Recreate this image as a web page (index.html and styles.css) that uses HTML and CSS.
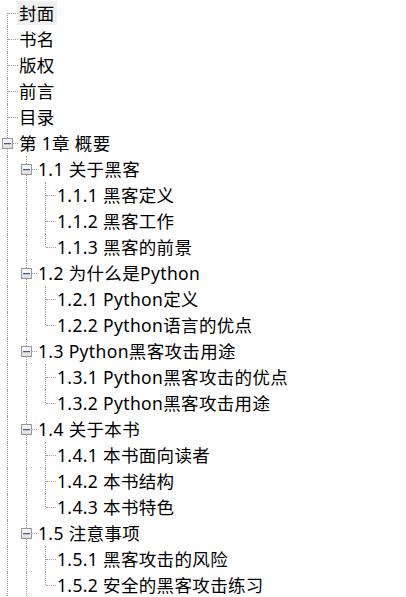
FILE: index.html
```html
<!DOCTYPE html>
<html lang="zh-CN">
<head>
<meta charset="utf-8">
<title>目录树</title>
<link rel="stylesheet" href="styles.css">
</head>
<body>
<div class="tree">
  <div class="row"><span class="c f"></span><span class="label sel">封面</span></div>
  <div class="row"><span class="c t"></span><span class="label">书名</span></div>
  <div class="row"><span class="c t"></span><span class="label">版权</span></div>
  <div class="row"><span class="c t"></span><span class="label">前言</span></div>
  <div class="row"><span class="c t"></span><span class="label">目录</span></div>
  <div class="row"><span class="c t"><i class="box"></i></span><span class="label">第 1章 概要</span></div>

  <div class="row"><span class="c v"></span><span class="c t"><i class="box"></i></span><span class="label">1.1 关于黑客</span></div>
  <div class="row"><span class="c v"></span><span class="c v"></span><span class="c t"></span><span class="label">1.1.1 黑客定义</span></div>
  <div class="row"><span class="c v"></span><span class="c v"></span><span class="c t"></span><span class="label">1.1.2 黑客工作</span></div>
  <div class="row"><span class="c v"></span><span class="c v"></span><span class="c l"></span><span class="label">1.1.3 黑客的前景</span></div>

  <div class="row"><span class="c v"></span><span class="c t"><i class="box"></i></span><span class="label">1.2 为什么是Python</span></div>
  <div class="row"><span class="c v"></span><span class="c v"></span><span class="c t"></span><span class="label">1.2.1 Python定义</span></div>
  <div class="row"><span class="c v"></span><span class="c v"></span><span class="c l"></span><span class="label">1.2.2 Python语言的优点</span></div>

  <div class="row"><span class="c v"></span><span class="c t"><i class="box"></i></span><span class="label">1.3 Python黑客攻击用途</span></div>
  <div class="row"><span class="c v"></span><span class="c v"></span><span class="c t"></span><span class="label">1.3.1 Python黑客攻击的优点</span></div>
  <div class="row"><span class="c v"></span><span class="c v"></span><span class="c l"></span><span class="label">1.3.2 Python黑客攻击用途</span></div>

  <div class="row"><span class="c v"></span><span class="c t"><i class="box"></i></span><span class="label">1.4 关于本书</span></div>
  <div class="row"><span class="c v"></span><span class="c v"></span><span class="c t"></span><span class="label">1.4.1 本书面向读者</span></div>
  <div class="row"><span class="c v"></span><span class="c v"></span><span class="c t"></span><span class="label">1.4.2 本书结构</span></div>
  <div class="row"><span class="c v"></span><span class="c v"></span><span class="c l"></span><span class="label">1.4.3 本书特色</span></div>

  <div class="row"><span class="c v"></span><span class="c t"><i class="box"></i></span><span class="label">1.5 注意事项</span></div>
  <div class="row"><span class="c v"></span><span class="c v"></span><span class="c t"></span><span class="label">1.5.1 黑客攻击的风险</span></div>
  <div class="row"><span class="c v"></span><span class="c v"></span><span class="c l"></span><span class="label">1.5.2 安全的黑客攻击练习</span></div>
  <div class="row"><span class="c v"></span><span class="c v"></span></div>
</div>
</body>
</html>
```

FILE: styles.css
```css
html, body {
  margin: 0;
  padding: 0;
  background: #ffffff;
}

.tree {
  display: flex;
  flex-direction: column;
  font-family: "Noto Sans", "Noto Sans CJK SC", sans-serif;
  font-size: 17.5px;
  letter-spacing: 0.35px;
  color: #000000;
}

.row {
  display: flex;
  align-items: stretch;
  height: 26px;
  white-space: nowrap;
}

.c {
  position: relative;
  flex: 0 0 19px;
  width: 19px;
  height: 26px;
}

/* vertical guide line */
.c::before {
  content: "";
  position: absolute;
  left: 7px;
  width: 0;
  border-left: 1px dotted #a0a0a0;
}

/* horizontal connector */
.c::after {
  content: "";
  position: absolute;
  left: 8px;
  top: 13px;
  width: 10px;
  height: 0;
  border-top: 1px dotted #a0a0a0;
}

.v::before { top: 0; bottom: 0; }
.v::after { display: none; }

.t::before { top: 0; bottom: 0; }

.l::before { top: 0; height: 13px; }

.f::before { top: 13px; bottom: 0; }

.box {
  position: absolute;
  z-index: 1;
  left: 2px;
  top: 8px;
  width: 9px;
  height: 9px;
  border: 1px solid #979797;
  background: linear-gradient(#ffffff 0%, #f3f3f3 45%, #dcdcdc 100%);
}

.box::after {
  content: "";
  position: absolute;
  left: 1px;
  top: 4px;
  width: 7px;
  height: 1px;
  background: #3e5a92;
  box-shadow: 0 1px 0 #b9c5dc;
}

.label {
  margin: 1px 0 1px -2px;
  padding: 0 2px 0 2px;
  height: 24px;
  line-height: 24px;
}

.sel {
  background: #efefef;
}
```
